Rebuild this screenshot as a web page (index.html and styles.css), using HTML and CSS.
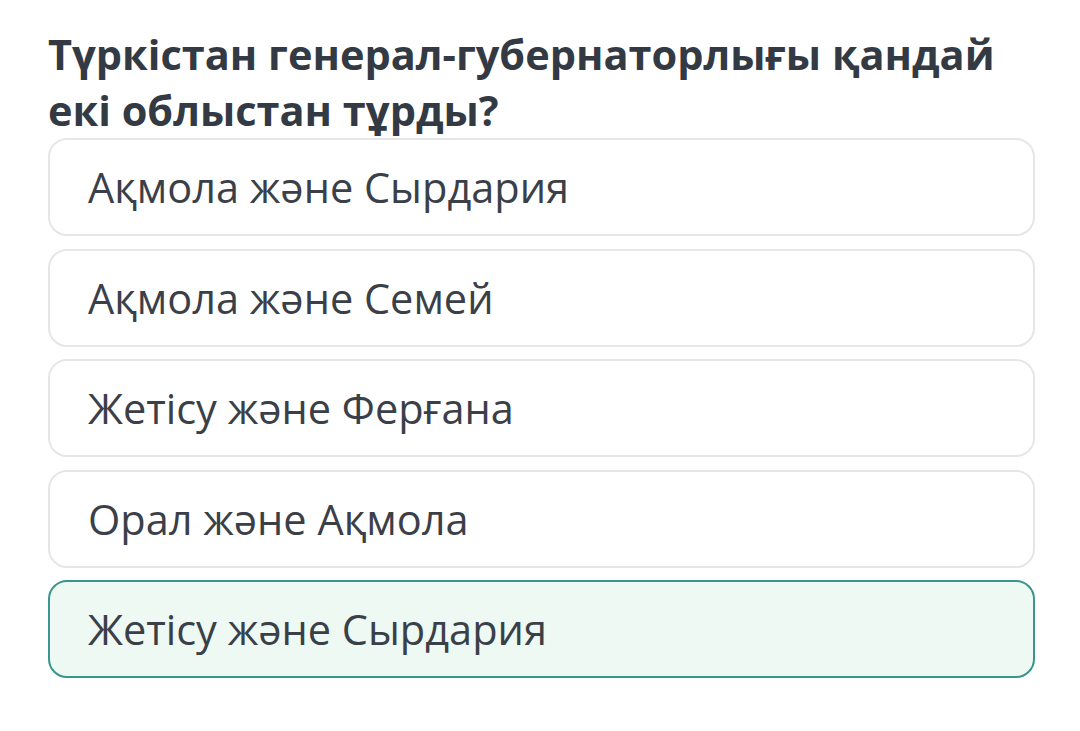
FILE: index.html
```html
<!DOCTYPE html>
<html lang="kk">
<head>
    <meta charset="UTF-8">
    <meta name="viewport" content="width=device-width, initial-scale=1.0">
    <title>Сұрақ</title>
    <link rel="stylesheet" href="styles.css">
</head>

<body>
    <div class="quiz">
        <h1 class="question">Түркістан генерал-губернаторлығы қандай екі облыстан тұрды?</h1>
        <div class="options">
            <div class="option">Ақмола және Сырдария</div>
            <div class="option">Ақмола және Семей</div>
            <div class="option">Жетісу және Ферғана</div>
            <div class="option">Орал және Ақмола</div>
            <div class="option correct">Жетісу және Сырдария</div>
        </div>
    </div>
</body>
</html>
```

FILE: styles.css
```css
body {
    font-family: "Open Sans", "Noto Sans", sans-serif;
    margin: 0;
    background-color: #ffffff;
    color: #3b4048;
}

.quiz {
    padding: 26px 45px 0 48px;
}

.question {
    font-size: 41.5px;
    font-weight: bold;
    line-height: 56px;
    color: #333a44;
    margin: 0;
}

.options {
    display: flex;
    flex-direction: column;
    gap: 12.5px;
}

.option {
    height: 94px;
    display: flex;
    align-items: center;
    padding: 0 38px;
    border: 2px solid #e6e6e6;
    border-radius: 19px;
    font-size: 41.5px;
    color: #3b4048;
}

.option.correct {
    background-color: #eef9f4;
    border-color: #3a958a;
}
```
